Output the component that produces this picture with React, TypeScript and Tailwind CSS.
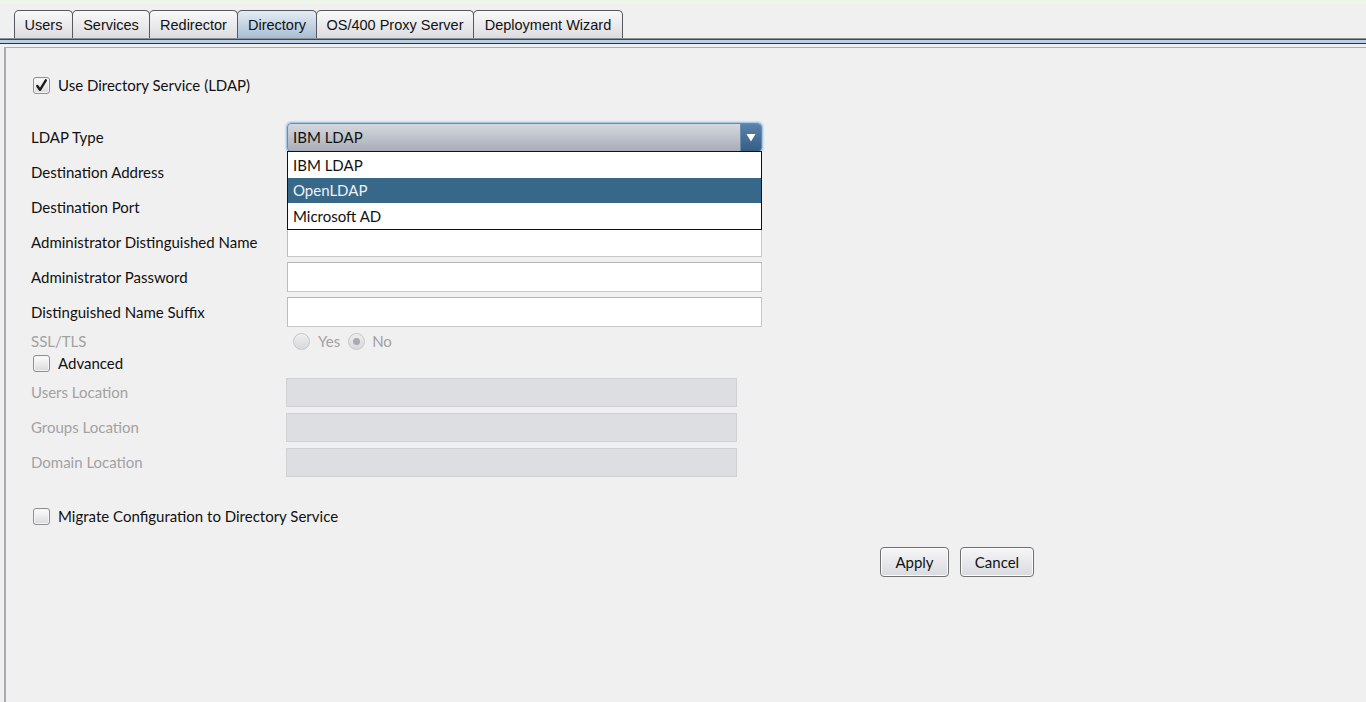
import React from "react";

const tabs: [string, string][] = [
  ["Users", "w-[59px]"],
  ["Services", "w-[78px]"],
  ["Redirector", "w-[89px]"],
  ["Directory", "w-[80px]"],
  ["OS/400 Proxy Server", "w-[158px]"],
  ["Deployment Wizard", "w-[150px]"],
];

function Checkbox({ checked }: { checked?: boolean }) {
  return (
    <div className="w-[17px] h-[17px] rounded-[3px] border border-[#8e8f8f] bg-gradient-to-b from-[#fdfdfd] to-[#d9dadc] shadow-[inset_0_0_0_1px_#f4f4f4] flex items-center justify-center">
      {checked && (
        <svg width="13" height="13" viewBox="0 0 13 13">
          <path d="M2.3 7 L5 10.8 L10.8 1.3" stroke="#1c1c1c" strokeWidth="2.4" fill="none" strokeLinecap="round" strokeLinejoin="round" />
        </svg>
      )}
    </div>
  );
}

function Radio({ checked }: { checked?: boolean }) {
  return (
    <div className="w-[17px] h-[17px] rounded-full border border-[#c4c6ca] bg-gradient-to-b from-[#eeeeef] to-[#d8d9dc] flex items-center justify-center">
      {checked && <div className="w-[7px] h-[7px] rounded-full bg-[#a9abb0]" />}
    </div>
  );
}

function Label({ children }: { children: React.ReactNode }) {
  return <div className="h-[30px] flex items-center text-[15px] text-[#111] -ml-[2px]">{children}</div>;
}

function DLabel({ children }: { children: React.ReactNode }) {
  return <div className="h-[29px] flex items-center text-[15px] text-[#a2a2a2] -ml-[2px]">{children}</div>;
}

function Input() {
  return <div className="h-[30px] w-[475px] bg-white border border-[#c7c7c7] border-t-[#b5b5b5] border-l-[#bdbdbd]" />;
}

function DisabledInput() {
  return <div className="h-[29px] w-[451px] bg-[#dcdee2] border border-[#d0d1d4] -ml-[1px]" />;
}

export default function App() {
  return (
    <div className="w-[1366px] h-[702px] bg-[#f0f0f0] overflow-hidden flex flex-col" style={{ fontFamily: "Lato, 'Open Sans', sans-serif" }}>
      <div className="h-[4px] bg-[#eef6ea]" />
      <div className="flex pl-[14px] pt-[6px] h-[34px] items-end" style={{ fontFamily: "'Liberation Sans', Arial, sans-serif" }}>
        {tabs.map(([t, w], i) => {
          const sel = t === "Directory";
          return (
            <div
              key={t}
              className={`${w} h-[28px] flex items-center justify-center text-[14.5px] text-[#111] border border-b-0 border-[#55585c] rounded-t-[5px] ${
                sel ? "bg-gradient-to-b from-[#e4ecf4] to-[#a8bed3]" : "bg-gradient-to-b from-[#f9f9f9] to-[#dcdde1]"
              } ${i > 0 ? "-ml-px" : ""}`}
            >
              <span className="pt-[3px]">{t}</span>
            </div>
          );
        })}
      </div>
      <div className="flex flex-col">
        <div className="h-px bg-[#8c8f94]" />
        <div className="h-px bg-[#3c4a58]" />
        <div className="h-[3px] bg-[#b9d0e6]" />
        <div className="h-px bg-[#2f3338]" />
        <div className="h-[3px]" />
      </div>
      <div className="flex-1 ml-[4px] border-l-2 border-t border-[#a8acb2] relative">
        <div className="pl-[27px] pt-[28px]">
          <div className="flex items-center gap-[8px] h-[18px]">
            <Checkbox checked />
            <span className="text-[15px] text-[#111]">Use Directory Service (LDAP)</span>
          </div>
          <div className="mt-[28px] grid grid-cols-[254px_475px] gap-y-[5px]">
            <Label>LDAP Type</Label>
            <div className="relative">
              <div className="mt-px h-[29px] rounded-[4px] border border-[#5f8fc2] shadow-[0_0_2px_1px_#8fb7e0] bg-gradient-to-b from-[#d4d8de] via-[#bfc3cb] to-[#a8adb6] flex items-stretch overflow-hidden">
                <div className="flex-1 flex items-center pl-[5px] text-[15px] text-[#111]">IBM LDAP</div>
                <div className="w-[21px] bg-gradient-to-b from-[#5b82aa] to-[#355d86] border-l border-[#6a8db0] flex items-center justify-center">
                  <svg width="10" height="9" viewBox="0 0 10 9"><path d="M0.5 1 L9.5 1 L5 8.5 Z" fill="#fff" /></svg>
                </div>
              </div>
              <div className="absolute left-0 top-[29px] w-[475px] bg-white border border-[#111] z-10 text-[15px]">
                <div className="h-[25px] flex items-center pl-[5px] text-[#111] mt-px">IBM LDAP</div>
                <div className="h-[25px] flex items-center pl-[5px] bg-[#386889] text-[#eef2f6]">OpenLDAP</div>
                <div className="h-[26px] flex items-center pl-[5px] text-[#111]">Microsoft AD</div>
              </div>
            </div>
            <Label>Destination Address</Label>
            <Input />
            <Label>Destination Port</Label>
            <Input />
            <Label>Administrator Distinguished Name</Label>
            <Input />
            <Label>Administrator Password</Label>
            <Input />
            <Label>Distinguished Name Suffix</Label>
            <Input />
          </div>
          <div className="grid grid-cols-[254px_475px] mt-[2px]">
            <div className="h-[24px] flex items-center text-[15px] text-[#a2a2a2] -ml-[2px]">SSL/TLS</div>
            <div className="h-[24px] flex items-center pl-[6px] text-[15px] text-[#a2a2a2]">
              <Radio />
              <span className="ml-[8px]">Yes</span>
              <div className="ml-[8px]"><Radio checked /></div>
              <span className="ml-[7px]">No</span>
            </div>
          </div>
          <div className="flex items-center gap-[8px] h-[18px] mt-px">
            <Checkbox />
            <span className="text-[15px] text-[#111]">Advanced</span>
          </div>
          <div className="mt-[6px] grid grid-cols-[254px_451px] gap-y-[6px]">
            <DLabel>Users Location</DLabel>
            <DisabledInput />
            <DLabel>Groups Location</DLabel>
            <DisabledInput />
            <DLabel>Domain Location</DLabel>
            <DisabledInput />
          </div>
          <div className="flex items-center gap-[8px] h-[18px] mt-[30px]">
            <Checkbox />
            <span className="text-[15px] text-[#111]">Migrate Configuration to Directory Service</span>
          </div>
          <div className="flex gap-[11px] mt-[22px] pl-[847px]">
            <div className="w-[69px] h-[30px] rounded-[4px] border border-[#707070] bg-gradient-to-b from-[#f6f6f7] to-[#d9dbe0] flex items-center justify-center text-[15px] text-[#111] shadow-[inset_0_0_0_1px_#fbfbfb]">Apply</div>
            <div className="w-[74px] h-[30px] rounded-[4px] border border-[#707070] bg-gradient-to-b from-[#f6f6f7] to-[#d9dbe0] flex items-center justify-center text-[15px] text-[#111] shadow-[inset_0_0_0_1px_#fbfbfb]">Cancel</div>
          </div>
        </div>
      </div>
    </div>
  );
}
